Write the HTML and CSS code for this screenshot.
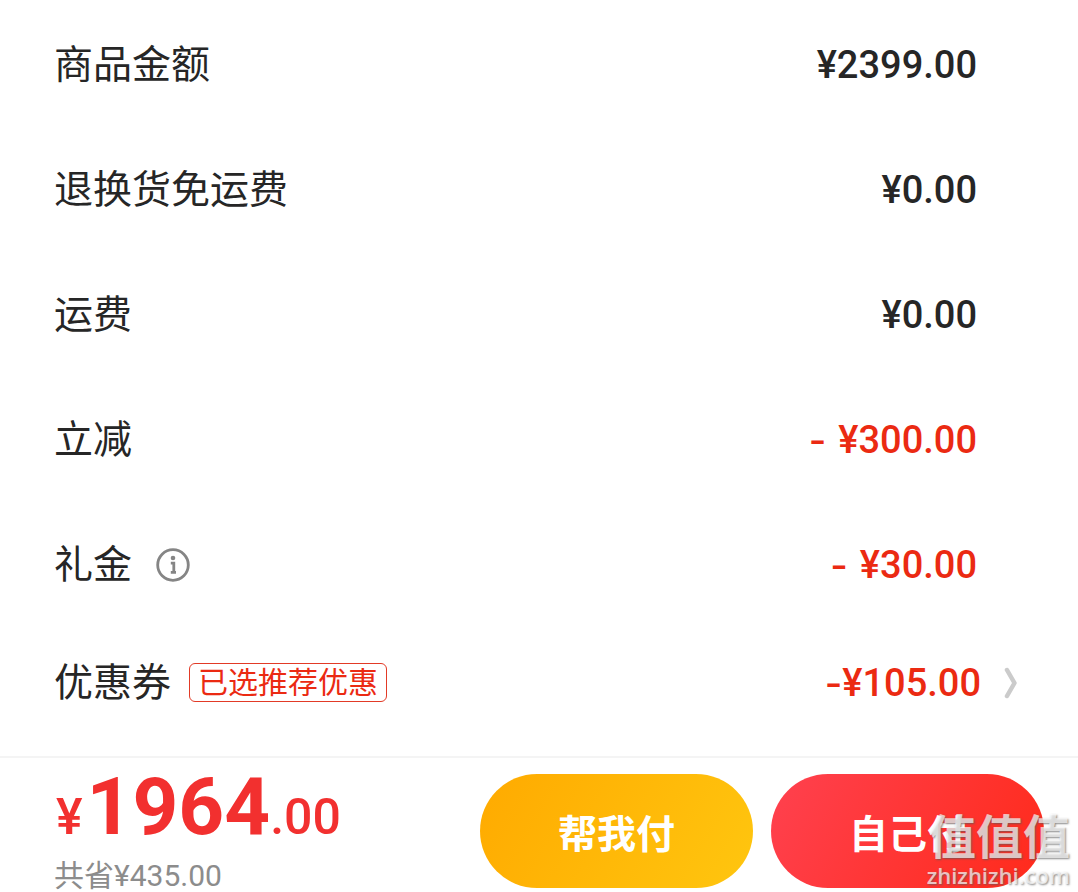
FILE: index.html
```html
<!DOCTYPE html>
<html lang="zh-CN">
<head>
<meta charset="utf-8">
<meta name="viewport" content="width=device-width, initial-scale=1">
<title>确认订单</title>
<link rel="stylesheet" href="styles.css">
</head>
<body>
<main class="summary">
  <dl class="rows">
    <div class="row"><dt>商品金额</dt><dd>¥2399.00</dd></div>
    <div class="row"><dt>退换货免运费</dt><dd>¥0.00</dd></div>
    <div class="row"><dt>运费</dt><dd>¥0.00</dd></div>
    <div class="row"><dt>立减</dt><dd class="discount"><span class="minus spaced">-</span>¥300.00</dd></div>
    <div class="row">
      <dt>礼金
        <button class="info" type="button" aria-label="礼金说明">
          <svg viewBox="0 0 34 34" width="34" height="34" aria-hidden="true">
            <circle cx="17" cy="17" r="15.3" fill="none" stroke="#858585" stroke-width="2.8"/>
            <circle cx="17" cy="10" r="2.3" fill="#858585"/>
            <path d="M14.8 15.2h3v8.8M14.8 24.3h5.2" fill="none" stroke="#858585" stroke-width="2.8"/>
          </svg>
        </button>
      </dt>
      <dd class="discount"><span class="minus spaced">-</span>¥30.00</dd>
    </div>
    <div class="row coupon">
      <dt>优惠券<span class="tag">已选推荐优惠</span></dt>
      <dd class="discount"><span class="minus">-</span>¥105.00
        <button class="more" type="button" aria-label="选择优惠券">
          <svg viewBox="0 0 14 32" width="14" height="32" aria-hidden="true">
            <path d="M3 3L10.5 16L3 29" fill="none" stroke="#cbcbcb" stroke-width="4.5" stroke-linecap="round" stroke-linejoin="round"/>
          </svg>
        </button>
      </dd>
    </div>
  </dl>
</main>
<footer class="paybar">
  <div class="total">
    <p class="amount"><span>¥</span><strong>1964</strong><span>.00</span></p>
    <p class="saved">共省¥435.00</p>
  </div>
  <div class="actions">
    <button class="pay help" type="button">帮我付</button>
    <button class="pay self" type="button">自己付</button>
  </div>
  <div class="watermark"><span class="mark">值值值</span><span class="site">zhizhizhi.com</span></div>
</footer>
</body>
</html>
```

FILE: styles.css
```css
* { box-sizing: border-box; }

body {
  margin: 0;
  background: #fff;
  color: #262626;
  font-family: Roboto, "Noto Sans CJK SC", sans-serif;
}

button {
  border: 0;
  padding: 0;
  background: none;
  font: inherit;
  cursor: pointer;
}

svg { display: block; }

.rows {
  margin: 0;
  padding: 2px 101px 18px 54px;
}

.row {
  display: flex;
  align-items: center;
  justify-content: space-between;
  min-height: 125px;
}

.row dt {
  display: flex;
  align-items: center;
  font-size: 39px;
  line-height: 56px;
}

.row dd {
  display: flex;
  align-items: center;
  margin: 0;
  font-size: 38px;
  font-weight: 500;
  line-height: 44px;
}

.row .discount { color: #eb2a12; }

.minus { font-family: Inter, sans-serif; }

.spaced { margin-right: 12px; }

.info { margin-left: 24px; }

.coupon {
  min-height: 111px;
  margin-right: -41px;
}

.tag {
  margin-left: 18px;
  padding: 0 8px;
  border: 1px solid #e23a26;
  border-radius: 6px;
  color: #eb2a12;
  font-size: 30px;
  line-height: 37px;
}

.more { margin-left: 23px; }

.paybar {
  position: relative;
  display: flex;
  align-items: flex-start;
  justify-content: space-between;
  padding: 16px 34px 4px 54px;
  border-top: 2px solid #f4f4f4;
}

.total p { margin: 0; }

.amount {
  display: flex;
  align-items: baseline;
  padding-left: 2px;
  color: #f2302f;
  font-size: 50px;
  font-weight: 500;
  line-height: 66px;
}

.amount strong {
  margin-left: 4px;
  font-size: 80px;
  font-weight: 700;
}

.saved {
  padding-top: 8px;
  color: #8c8c8c;
  font-size: 30px;
  line-height: 36px;
}

.actions {
  display: flex;
  gap: 18px;
}

.pay {
  min-width: 273px;
  min-height: 114px;
  border-radius: 57px;
  color: #fff;
  font-size: 39px;
  font-weight: 700;
}

.help { background: linear-gradient(120deg, #ffaa00, #ffc60f); }

.self { background: linear-gradient(120deg, #ff414f, #ff2a1a); }

/* Site mark laid over the corner of the pay bar */
.watermark {
  position: absolute;
  right: 8px;
  bottom: 10px;
  display: flex;
  flex-direction: column;
  align-items: flex-end;
  color: rgba(255, 255, 255, 0.7);
  text-shadow: 1px 1px 2px rgba(90, 90, 90, 0.7);
  pointer-events: none;
}

.mark {
  font-size: 47px;
  font-weight: 700;
  line-height: 48px;
}

.site {
  font-family: "Open Sans", sans-serif;
  font-size: 22px;
  font-weight: 600;
  line-height: 26px;
}
```
